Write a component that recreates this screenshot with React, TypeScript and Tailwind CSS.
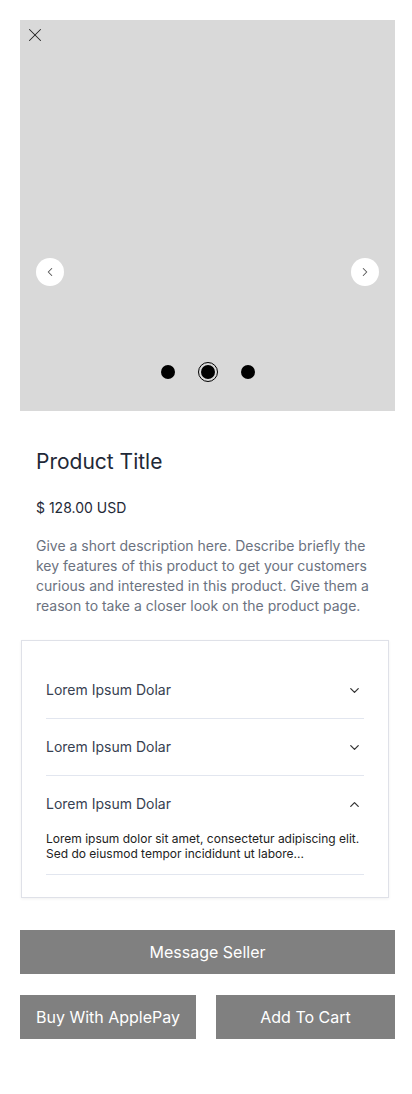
import { ChevronDown, ChevronLeft, ChevronRight, ChevronUp, X } from "lucide-react";

const items = [
  { title: "Lorem Ipsum Dolar", open: false },
  { title: "Lorem Ipsum Dolar", open: false },
  { title: "Lorem Ipsum Dolar", open: true },
];

export default function App() {
  return (
    <main className="min-h-[1094px] w-[412px] bg-white pt-5 pb-14 font-['Inter',sans-serif]">
      {/* gallery */}
      <div className="relative ml-5 h-[391px] w-[375px] bg-[#d9d9d9]">
        <button type="button" className="absolute left-[4px] top-[4px] text-[#222]">
          <X size={22} strokeWidth={1.1} />
        </button>

        <button
          type="button"
          className="absolute left-4 top-[238px] flex h-7 w-7 items-center justify-center rounded-full bg-white text-[#555]"
        >
          <ChevronLeft size={14} strokeWidth={1.8} />
        </button>
        <button
          type="button"
          className="absolute right-4 top-[238px] flex h-7 w-7 items-center justify-center rounded-full bg-white text-[#555]"
        >
          <ChevronRight size={14} strokeWidth={1.8} />
        </button>

        <div className="absolute bottom-[29px] left-0 right-0 flex items-center justify-center gap-[23px]">
          <span className="h-[14px] w-[14px] rounded-full bg-black" />
          <span className="flex h-5 w-5 items-center justify-center rounded-full border border-black">
            <span className="h-[14px] w-[14px] rounded-full bg-black" />
          </span>
          <span className="h-[14px] w-[14px] rounded-full bg-black" />
        </div>
      </div>

      {/* info */}
      <section className="px-9">
        <h1 className="mt-[37px] text-[21px] leading-7 font-normal text-[#1f2937]">
          Product Title
        </h1>
        <p className="mt-[22px] text-sm leading-5 text-[#1f2937]">$ 128.00 USD</p>
        <p className="mt-[18px] text-sm leading-5 text-[#6b7280]">
          Give a short description here. Describe briefly the key features of
          this product to get your customers curious and interested in this
          product. Give them a reason to take a closer look on the product page.
        </p>
      </section>

      {/* accordion */}
      <div className="ml-[21px] mt-6 w-[368px] border border-[#dfe1e8] bg-white px-6 pt-[21px] pb-[22px] shadow-[0_1px_3px_rgba(0,0,0,0.06)]">
        {items.map((item, i) => (
          <div key={i} className="border-b border-[#e2e6ef]">
            <div className="flex h-14 items-center justify-between">
              <span className="text-sm text-[#374151]">{item.title}</span>
              {item.open ? (
                <ChevronUp size={15} strokeWidth={2} className="mr-[2px] text-[#333]" />
              ) : (
                <ChevronDown size={15} strokeWidth={2} className="mr-[2px] text-[#333]" />
              )}
            </div>
            {item.open && (
              <p className="-mt-[1px] pb-[13px] text-xs leading-[15px] text-[#222]">
                Lorem ipsum dolor sit amet, consectetur adipiscing elit.
                <br />
                Sed do eiusmod tempor incididunt ut labore...
              </p>
            )}
          </div>
        ))}
      </div>

      {/* actions */}
      <div className="ml-5 mt-8 w-[375px]">
        <button
          type="button"
          className="flex h-11 w-full items-center justify-center bg-[#808080] text-base text-white"
        >
          Message Seller
        </button>
        <div className="mt-[21px] flex gap-5">
          <button
            type="button"
            className="flex h-11 w-[176px] items-center justify-center bg-[#808080] text-base text-white"
          >
            Buy With ApplePay
          </button>
          <button
            type="button"
            className="flex h-11 flex-1 items-center justify-center bg-[#808080] text-base text-white"
          >
            Add To Cart
          </button>
        </div>
      </div>
    </main>
  );
}
